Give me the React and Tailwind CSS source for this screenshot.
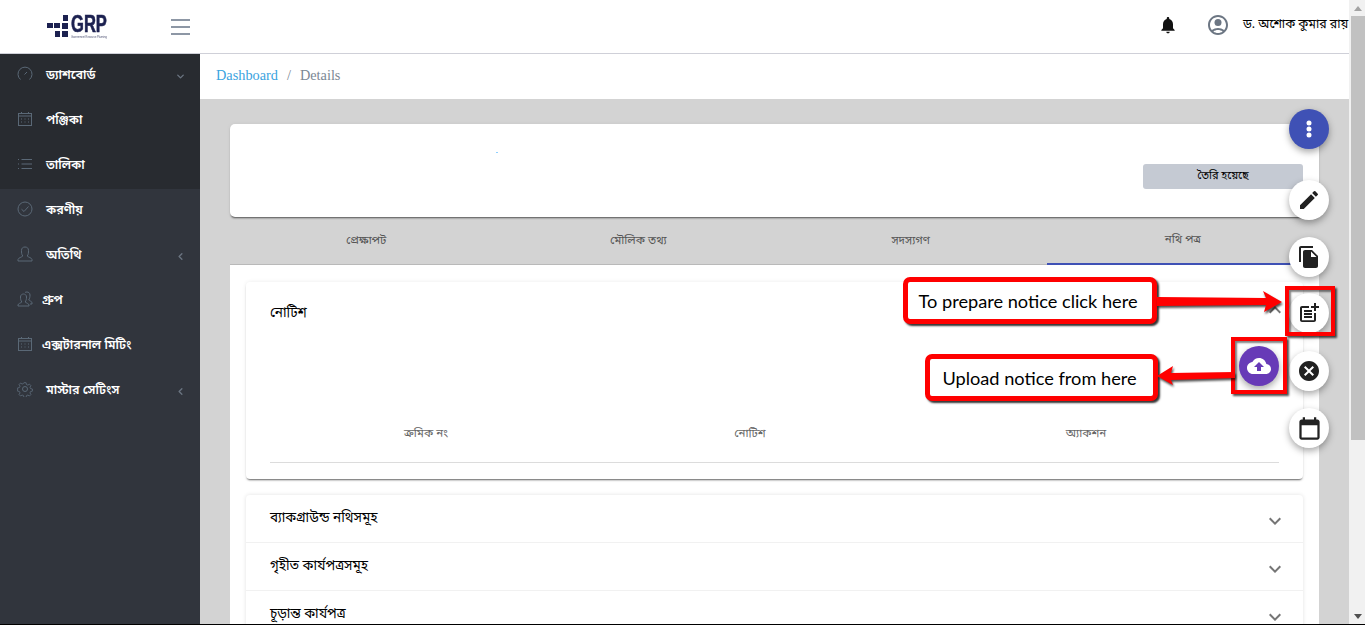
import React from 'react';
import { ChevronDown, ChevronLeft } from 'lucide-react';

const banglaFont = "font-['Noto_Sans_Bengali','Lohit_Bengali','FreeSans','Noto_Sans',sans-serif]";

const Gauge = () => (
  <svg viewBox="0 0 16 16" className="w-4 h-4 -mt-[5px]" fill="none" stroke="#5a6876" strokeWidth="1">
    <path d="M3.500 13.500A7 7 0 1 1 12.500 13.500" />
    <path d="M7.500 8.500 10 6" />
  </svg>
);
const Calendar = () => (
  <svg viewBox="0 0 16 16" className="w-4 h-4 -mt-[5px]" fill="none" stroke="#5a6876" strokeWidth="1">
    <rect x="1.500" y="2.500" width="13" height="12" />
    <path d="M4.500 1v2M11.500 1v2M1.500 5h13M4 8h1M7.500 8h1M11 8h1M4 11h1M7.500 11h1M11 11h1" />
  </svg>
);
const ListIcon = () => (
  <svg viewBox="0 0 16 16" className="w-4 h-4 -mt-[5px]" fill="none" stroke="#5a6876" strokeWidth="1">
    <path d="M1 3.500h1M1 8h1M1 12.500h1M4.500 3.500H15M4.500 8H15M4.500 12.500H15" />
  </svg>
);
const CheckCircle = () => (
  <svg viewBox="0 0 16 16" className="w-4 h-4 -mt-[5px]" fill="none" stroke="#5a6876" strokeWidth="1">
    <circle cx="8" cy="8" r="7" />
    <path d="M4.500 8.200 7 10.500 11.500 5.500" />
  </svg>
);
const User = () => (
  <svg viewBox="0 0 16 16" className="w-4 h-4 -mt-[5px]" fill="none" stroke="#5a6876" strokeWidth="1">
    <path d="M1 15v-1.500c0-1.500 4-2.500 4.800-3.500C4.500 8.500 4.500 6.500 4.500 4.500 4.500 2 6 1 8 1s3.500 1 3.500 3.500c0 2 0 4-1.300 5.500.8 1 4.800 2 4.800 3.500V15z" />
  </svg>
);
const Users = () => (
  <svg viewBox="0 0 16 16" className="w-4 h-4 -mt-[5px]" fill="none" stroke="#5a6876" strokeWidth="1">
    <path d="M1 15v-1c0-1.500 3-2 3.800-3C3.800 9.500 3.500 8 3.500 6 3.500 4 5 3 6.500 3S9.500 4 9.500 6c0 2-.3 3.500-1.300 5 .8 1 3.800 1.500 3.800 3v1z" />
    <path d="M8 1.500c.5-.4 1.200-.5 2-.5 1.500 0 3 1 3 3 0 2-.3 3.500-1.300 5 .8 1 3.300 1.200 3.300 2.800V13h-2" />
  </svg>
);
const Gear = () => (
  <svg viewBox="0 0 16 16" className="w-4 h-4 -mt-[5px]" fill="none" stroke="#5a6876" strokeWidth="1">
    <circle cx="8" cy="8" r="2.500" />
    <path d="M6.800 1h2.400l.4 2 1.600.7 1.700-1.100 1.700 1.700-1.100 1.700.7 1.600 2 .4v2.400l-2 .4-.7 1.600 1.100 1.700-1.700 1.700-1.700-1.100-1.600.7-.4 2H6.800l-.4-2-1.600-.7-1.700 1.100-1.700-1.700 1.100-1.700-.7-1.600-2-.4V6.800l2-.4.7-1.600-1.100-1.700 1.700-1.700 1.700 1.100 1.600-.7z" transform="translate(.8 .8) scale(.9)" />
  </svg>
);

const menu = [
  { label: 'ড্যাশবোর্ড', icon: Gauge, arrow: 'down', dark: true, gap: 'ml-[13px]' },
  { label: 'পঞ্জিকা', icon: Calendar, dark: true, gap: 'ml-[13px]' },
  { label: 'তালিকা', icon: ListIcon, dark: true, gap: 'ml-[13px]' },
  { label: 'করণীয়', icon: CheckCircle, gap: 'ml-[13px]' },
  { label: 'অতিথি', icon: User, arrow: 'left', gap: 'ml-[13px]' },
  { label: 'গ্রুপ', icon: Users, gap: 'ml-[9px]' },
  { label: 'এক্সটারনাল মিটিং', icon: Calendar, gap: 'ml-[9px]' },
  { label: 'মাস্টার সেটিংস', icon: Gear, arrow: 'left', gap: 'ml-[13px]' },
];

const Fab = ({ center, children, className }) => (
  <div className={`absolute w-10 h-10 rounded-full flex items-center justify-center shadow-[0_3px_7px_rgba(0,0,0,0.35)] ${center} ${className}`}>
    {children}
  </div>
);

const MdIcon = ({ d, fill = '#212121', size = 'w-6 h-6' }) => (
  <svg viewBox="0 0 24 24" className={size} fill={fill}><path d={d} /></svg>
);

const expandMore = 'M16.590 8.590 12 13.170 7.410 8.590 6 10l6 6 6-6z';
const expandLess = 'M12 8l-6 6 1.410 1.410L12 10.830l4.590 4.580L18 14z';

export default function App() {
  return (
    <div className={`relative flex h-[625px] w-[1365px] overflow-hidden border-b border-black bg-white ${banglaFont}`}>
      <div className="flex flex-col w-[1349px] shrink-0">
        <header className="h-[54px] shrink-0 flex items-center border-b border-[#cfd0d8] bg-white">
          <div className="w-[200px] flex items-center">
            <div className="ml-[47px] w-[61px] h-[28px] relative">
              <svg viewBox="0 0 61 28" className="w-[61px] h-[28px]">
                <g fill="#1c2150">
                  <rect x="16" y="2" width="5" height="6" />
                  <rect x="0" y="10" width="6" height="5" />
                  <rect x="7" y="10" width="6" height="5" />
                  <rect x="15" y="10" width="6" height="6" />
                  <rect x="8" y="18" width="5" height="6" />
                  <rect x="15" y="18" width="6" height="6" />
                </g>
              </svg>
              <span className="absolute left-[24px] top-0 font-['Liberation_Sans',sans-serif] font-bold text-[#1c2150] text-[24px] leading-[21px] scale-x-[0.69] origin-left [-webkit-text-stroke:0.6px_#1c2150]">GRP</span>
              <span className="absolute left-[24px] top-[21px] font-['Liberation_Sans',sans-serif] text-[#4a4f70] text-[4px] leading-[5px] whitespace-nowrap scale-x-[0.63] origin-left">Government Resource Planning</span>
            </div>
            <div className="ml-[63px] flex flex-col gap-[5px] w-[19px]">
              <span className="h-[2px] bg-[#8d97a5]" />
              <span className="h-[2px] bg-[#8d97a5]" />
              <span className="h-[2px] bg-[#8d97a5]" />
            </div>
          </div>
          <div className="ml-auto flex items-center -mt-[3px]">
            <MdIcon fill="#111" size="w-5 h-5" d="M12 22c1.100 0 2-.9 2-2h-4c0 1.100.9 2 2 2zm6-6v-5c0-3.100-1.600-5.600-4.500-6.300V4c0-.8-.7-1.500-1.500-1.500s-1.500.7-1.500 1.500v.7C7.600 5.400 6 7.900 6 11v5l-2 2v1h16v-1z" />
            <svg viewBox="0 0 24 24" className="w-6 h-6 ml-[28px]" fill="#6c7683">
              <path fillRule="evenodd" d="M12 2C6.480 2 2 6.480 2 12s4.480 10 10 10 10-4.480 10-10S17.520 2 12 2zM7.350 18.500C8.660 17.560 10.260 17 12 17s3.340.56 4.650 1.500c-1.310.94-2.910 1.500-4.650 1.500s-3.340-.56-4.650-1.500zm10.790-1.380C16.450 15.800 14.320 15 12 15s-4.450.8-6.140 2.120C4.700 15.730 4 13.950 4 12c0-4.420 3.580-8 8-8s8 3.580 8 8c0 1.950-.7 3.730-1.860 5.120z" />
              <circle cx="12" cy="9.500" r="3.500" />
            </svg>
            <div className="ml-[13px] w-[106px] whitespace-nowrap text-[12.4px] text-black">ড. অশোক কুমার রায়</div>
          </div>
        </header>
        <div className="flex flex-1 min-h-0">
          <aside className="w-[200px] shrink-0 bg-[#31353d]">
            {menu.map((item) => {
              const Icon = item.icon;
              return (
                <div key={item.label} className={`h-[45px] flex items-center pl-[17px] pr-[14px] ${item.dark ? 'bg-[#282b30]' : ''}`}>
                  <Icon />
                  <span className={`${item.gap} text-[12.5px] font-semibold text-white whitespace-nowrap`}>{item.label}</span>
                  {item.arrow === 'down' && <ChevronDown className="ml-auto w-[11px] h-[11px] text-[#6a7480]" strokeWidth={3} />}
                  {item.arrow === 'left' && <ChevronLeft className="ml-auto w-[11px] h-[11px] text-[#6a7480]" strokeWidth={3} />}
                </div>
              );
            })}
          </aside>
          <main className="flex-1 flex flex-col min-w-0 bg-[#d3d3d3]">
            <div className="h-[45px] shrink-0 bg-white flex items-center pl-[16px] pb-[2px] text-[14.3px] font-['Liberation_Serif',serif]">
              <span className="text-[#3aa3e0]">Dashboard</span>
              <span className="mx-[9px] text-[#7b8794]">/</span>
              <span className="text-[#7b8794]">Details</span>
            </div>
            <div className="flex-1 min-h-0 overflow-hidden pl-[30px] pr-[30px] pt-[25px]">
              <div className="relative h-[93px] rounded-[5px] bg-white shadow-[0_2px_2px_-1px_rgba(0,0,0,0.6),0_0_4px_rgba(0,0,0,0.06)] flex items-end justify-end pr-4 pb-7">
                <span className="absolute left-[266px] top-[28px] w-[2px] h-[1px] bg-[#8fd0ff]" />
                <div className="w-[160px] h-[25px] rounded-[3px] bg-[#c5cad3] flex items-center justify-center text-[11px] text-black">তৈরি হয়েছে</div>
              </div>
              <div className="grid grid-cols-4 h-[48px] border-b border-[#b9b9b9] text-[11.5px] text-[#555]">
                {['প্রেক্ষাপট', 'মৌলিক তথ্য', 'সদস্যগণ', 'নথি পত্র'].map((t, i) => (
                  <div key={t} className={`flex items-center justify-center pt-[2px] ${i === 3 ? 'border-b-2 border-[#3f51b5] -mb-px' : ''}`}>{t}</div>
                ))}
              </div>
              <div className="bg-white h-[400px] px-4 pt-[17px]">
                <div className="h-[197px] rounded-[4px] bg-white shadow-[0_2px_2px_-1px_rgba(0,0,0,0.6),0_0_4px_rgba(0,0,0,0.08)] pl-6 flex flex-col">
                  <div className="h-[60px] flex items-center justify-between pr-4 shrink-0">
                    <span className="mt-1 text-[13.5px] text-black">নোটিশ</span>
                    <div className="-mt-1"><MdIcon fill="#757575" d={expandLess} /></div>
                  </div>
                  <div className="mr-6 mt-[84px] h-[37px] border-b border-[#dcdcdc] grid grid-cols-[312px_336px_336px] text-[11.5px] text-[#666] text-center">
                    <span>ক্রমিক নং</span>
                    <span>নোটিশ</span>
                    <span>অ্যাকশন</span>
                  </div>
                </div>
                <div className="mt-4 rounded-t-[4px] shadow-[0_0_4px_rgba(0,0,0,0.12)]">
                  {['ব্যাকগ্রাউন্ড নথিসমূহ', 'গৃহীত কার্যপত্রসমূহ', 'চূড়ান্ত কার্যপত্র'].map((t) => (
                    <div key={t} className="h-[48px] pl-6 pr-4 flex items-center justify-between border-b border-[#f1f1f1] text-[13.5px] text-black">
                      <span className="mt-[2px]">{t}</span>
                      <div className="mt-1"><MdIcon fill="#757575" d={expandMore} /></div>
                    </div>
                  ))}
                </div>
              </div>
            </div>
          </main>
        </div>
      </div>
      <div className="w-4 shrink-0 bg-[#f1f1f1] flex flex-col items-end">
        <div className="h-[16px] w-full flex items-center justify-center pl-[2px]">
          <span className="w-0 h-0 border-x-[4px] border-x-transparent border-b-[5px] border-b-[#a3a3a3]" />
        </div>
        <div className="w-[14px] h-[424px] bg-[#c1c1c1]" />
        <div className="mt-auto w-full h-[15px] flex items-center justify-center pl-[2px]">
          <span className="w-0 h-0 border-x-[4px] border-x-transparent border-t-[5px] border-t-[#505050]" />
        </div>
      </div>

      <Fab center="left-[1289px] top-[109px]" className="bg-[#3f51b5]">
        <svg viewBox="0 0 24 24" className="w-6 h-6" fill="#fff">
          <circle cx="12" cy="6" r="2.500" />
          <circle cx="12" cy="12" r="2.500" />
          <circle cx="12" cy="18" r="2.500" />
        </svg>
      </Fab>
      <Fab center="left-[1289px] top-[180px]" className="bg-white">
        <MdIcon d="M3 17.250V21h3.750L17.810 9.940l-3.750-3.750L3 17.250zM20.710 7.040a1 1 0 0 0 0-1.410l-2.340-2.340a1 1 0 0 0-1.410 0l-1.830 1.830 3.750 3.750 1.830-1.830z" />
      </Fab>
      <Fab center="left-[1289px] top-[237px]" className="bg-white">
        <MdIcon d="M16 1H4c-1.100 0-2 .9-2 2v14h2V3h12V1zm-1 4 6 6v10c0 1.100-.9 2-2 2H7.990C6.890 23 6 22.100 6 21l.01-14c0-1.100.89-2 1.990-2h7zm-1 7h5.500L14 6.500V12z" />
      </Fab>
      <Fab center="left-[1289px] top-[293px]" className="bg-white">
        <MdIcon d="M17 19.220H5V7h7V5H5c-1.100 0-2 .9-2 2v12c0 1.100.9 2 2 2h12c1.100 0 2-.9 2-2v-7h-2v7.220zM19 2h-2v3h-3c.01.01 0 2 0 2h3v2.990c.01.01 2 0 2 0V7h3V5h-3V2zM7 9h8v2H7zM7 12v2h8v-2zM7 15h8v2H7z" />
      </Fab>
      <Fab center="left-[1289px] top-[351px]" className="bg-white">
        <MdIcon d="M12 2C6.470 2 2 6.470 2 12s4.470 10 10 10 10-4.470 10-10S17.530 2 12 2zm5 13.590L15.590 17 12 13.410 8.410 17 7 15.590 10.590 12 7 8.410 8.410 7 12 10.590 15.590 7 17 8.410 13.410 12 17 15.590z" />
      </Fab>
      <Fab center="left-[1289px] top-[408px]" className="bg-white">
        <MdIcon size="w-[27px] h-[27px]" d="M19 4h-1V2h-2v2H8V2H6v2H5c-1.100 0-2 .9-2 2v14c0 1.100.9 2 2 2h14c1.100 0 2-.9 2-2V6c0-1.100-.9-2-2-2zm0 16H5V9h14v11z" />
      </Fab>
      <Fab center="left-[1239px] top-[346px]" className="bg-[#673ab7]">
        <MdIcon fill="#fff" d="M19.350 10.040C18.670 6.590 15.640 4 12 4 9.110 4 6.600 5.640 5.350 8.040 2.340 8.360 0 10.910 0 14c0 3.310 2.690 6 6 6h13c2.760 0 5-2.240 5-5 0-2.640-2.050-4.780-4.650-4.960zM14 13v4h-4v-4H7l5-5 5 5h-3z" />
      </Fab>

      <div className="absolute left-[1285px] top-[286px] w-[50px] h-[50px] border-4 border-[#ff0000] shadow-[2px_2px_2px_rgba(0,0,0,0.7),inset_2px_2px_2px_rgba(0,0,0,0.5)]" />
      <div className="absolute left-[1231px] top-[337px] w-[56px] h-[57px] border-4 border-[#ff0000] shadow-[2px_2px_2px_rgba(0,0,0,0.7),inset_2px_2px_2px_rgba(0,0,0,0.5)]" />

      <div className="absolute left-[903px] top-[277px] w-[254px] h-[47px] pr-1 pt-[3px] bg-white rounded-[7px] border-[5px] border-[#ff0000] shadow-[2px_2px_2px_rgba(0,0,0,0.8)] flex items-center justify-center text-[18.2px] text-black font-['Lato',sans-serif]">To prepare notice click here</div>
      <div className="absolute left-[925px] top-[354px] w-[233px] h-[47px] pr-1 pt-[3px] bg-white rounded-[7px] border-[5px] border-[#ff0000] shadow-[2px_2px_2px_rgba(0,0,0,0.8)] flex items-center justify-center text-[18.2px] text-black font-['Lato',sans-serif]">Upload notice from here</div>

      <svg className="absolute left-[1150px] top-[285px] w-[140px] h-[110px] drop-shadow-[1px_2px_1px_rgba(0,0,0,0.7)]" viewBox="0 0 140 110">
        <path d="M7 12 L116 13 L113 6 L132 17 L114 27 L116 20 L7 21 Z" fill="#ff0000" />
        <path d="M85 87 L21 88 L23 81 L7 91 L23 100 L21 95 L85 93 Z" fill="#ff0000" />
      </svg>
    </div>
  );
}
